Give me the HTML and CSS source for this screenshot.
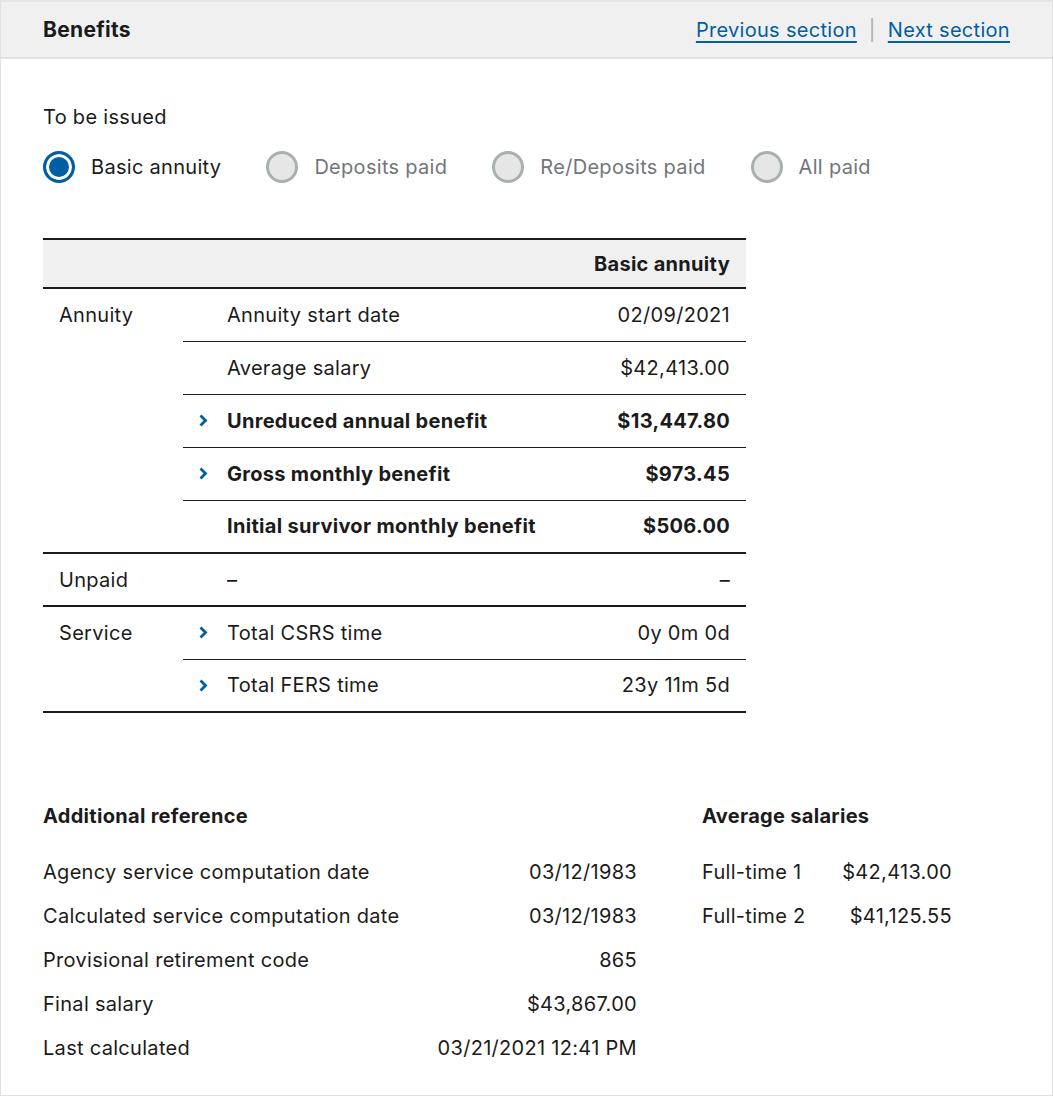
FILE: index.html
```html
<!DOCTYPE html>
<html lang="en">
<head>
<meta charset="utf-8">
<title>Benefits</title>
<link rel="stylesheet" href="styles.css">
</head>
<body>
<div class="page">
  <header class="bar">
    <h1 class="bar-title">Benefits</h1>
    <nav class="bar-nav">
      <a href="#" class="link">Previous section</a>
      <span class="sep">|</span>
      <a href="#" class="link">Next section</a>
    </nav>
  </header>
  <main class="content">
    <div class="issued-label">To be issued</div>
    <div class="radios">
      <label class="radio checked"><span class="dot"></span><span class="radio-text">Basic annuity</span></label>
      <label class="radio"><span class="dot"></span><span class="radio-text">Deposits paid</span></label>
      <label class="radio"><span class="dot"></span><span class="radio-text">Re/Deposits paid</span></label>
      <label class="radio"><span class="dot"></span><span class="radio-text">All paid</span></label>
    </div>

    <table class="bt">
      <colgroup>
        <col class="c1"><col class="c2"><col class="c3"><col class="c4">
      </colgroup>
      <thead>
        <tr class="head"><th></th><th></th><th></th><th class="num">Basic annuity</th></tr>
      </thead>
      <tbody class="grp">
        <tr><td class="cat" rowspan="5">Annuity</td><td class="chev"></td><td>Annuity start date</td><td class="num">02/09/2021</td></tr>
        <tr><td class="chev"></td><td>Average salary</td><td class="num">$42,413.00</td></tr>
        <tr class="b"><td class="chev"><svg width="9" height="13" viewBox="0 0 9 13"><path d="M1.5 1.5 L6.5 6.5 L1.5 11.5" fill="none" stroke="#005ea2" stroke-width="2.8"/></svg></td><td>Unreduced annual benefit</td><td class="num">$13,447.80</td></tr>
        <tr class="b"><td class="chev"><svg width="9" height="13" viewBox="0 0 9 13"><path d="M1.5 1.5 L6.5 6.5 L1.5 11.5" fill="none" stroke="#005ea2" stroke-width="2.8"/></svg></td><td>Gross monthly benefit</td><td class="num">$973.45</td></tr>
        <tr class="b last"><td class="chev"></td><td>Initial survivor monthly benefit</td><td class="num">$506.00</td></tr>
      </tbody>
      <tbody class="grp">
        <tr class="last"><td class="cat">Unpaid</td><td class="chev"></td><td>–</td><td class="num">–</td></tr>
      </tbody>
      <tbody class="grp">
        <tr><td class="cat" rowspan="2">Service</td><td class="chev"><svg width="9" height="13" viewBox="0 0 9 13"><path d="M1.5 1.5 L6.5 6.5 L1.5 11.5" fill="none" stroke="#005ea2" stroke-width="2.8"/></svg></td><td>Total CSRS time</td><td class="num">0y 0m 0d</td></tr>
        <tr class="last"><td class="chev"><svg width="9" height="13" viewBox="0 0 9 13"><path d="M1.5 1.5 L6.5 6.5 L1.5 11.5" fill="none" stroke="#005ea2" stroke-width="2.8"/></svg></td><td>Total FERS time</td><td class="num">23y 11m 5d</td></tr>
      </tbody>
    </table>

    <section class="extra">
      <div class="ref">
        <h2 class="sub">Additional reference</h2>
        <dl class="ref-list">
          <div class="ref-row"><dt>Agency service computation date</dt><dd>03/12/1983</dd></div>
          <div class="ref-row"><dt>Calculated service computation date</dt><dd>03/12/1983</dd></div>
          <div class="ref-row"><dt>Provisional retirement code</dt><dd>865</dd></div>
          <div class="ref-row"><dt>Final salary</dt><dd>$43,867.00</dd></div>
          <div class="ref-row"><dt>Last calculated</dt><dd>03/21/2021 12:41 PM</dd></div>
        </dl>
      </div>
      <div class="avg">
        <h2 class="sub">Average salaries</h2>
        <dl class="avg-list">
          <dt>Full-time 1</dt><dd>$42,413.00</dd>
          <dt>Full-time 2</dt><dd>$41,125.55</dd>
        </dl>
      </div>
    </section>
  </main>
</div>
</body>
</html>
```

FILE: styles.css
```css
* { box-sizing: border-box; }
html, body { margin: 0; padding: 0; background: #fff; }
body {
  font-family: Inter, "Liberation Sans", sans-serif;
  font-size: 20px;
  letter-spacing: 0.3px;
  color: #1b1b1b;
}
.page {
  width: 1053px;
  height: 1096px;
  border: 1px solid #dfe1e2;
  border-top: 2px solid #e4e4e4;
}
.bar {
  height: 57px;
  background: #f0f0f0;
  border-bottom: 2px solid #dfe1e2;
  display: flex;
  align-items: center;
  justify-content: space-between;
  padding: 0 42px 0 42px;
}
.bar-title { margin: 0; font-size: 21px; font-weight: 700; }
.bar-nav { display: flex; align-items: center; gap: 12px; }
.link { color: #005ea2; text-decoration: underline; text-underline-offset: 4px; }
.sep { color: #a9aeb1; }
.content { padding: 44px 42px 0 42px; }
.issued-label { line-height: 28px; }
.radios { display: flex; gap: 45px; margin-top: 13px; height: 46px; align-items: center; }
.radio { display: flex; align-items: center; gap: 16px; color: #71767a; }
.radio.checked { color: #1b1b1b; }
.dot {
  width: 32px; height: 32px; border-radius: 50%;
  border: 3px solid #a9aeb1; background: #e6e6e6;
}
.radio.checked .dot {
  border-color: #005ea2; background: #005ea2;
  box-shadow: inset 0 0 0 3px #fff;
}
.bt {
  margin-top: 48px;
  width: 703px;
  border-collapse: collapse;
  border-top: 2px solid #1b1b1b;
}
.c1 { width: 140px; } .c2 { width: 44px; } .c3 { width: 310px; } .c4 { width: 209px; }
.bt th, .bt td { padding: 0; height: 53px; text-align: left; font-weight: 400; vertical-align: middle; }
.bt thead th { height: 49px; background: #f0f0f0; border-bottom: 2px solid #1b1b1b; font-weight: 700; }
.bt td { border-bottom: 1px solid #1b1b1b; }
.bt .num { text-align: right; padding-right: 16px; }
.bt .cat { vertical-align: top; padding: 14px 16px 0 16px; }
.bt tr.last td, .bt td.cat { border-bottom: 2px solid #1b1b1b; }
.bt .chev { padding-left: 16px; }
.bt .chev svg { display: block; }
.bt tr.b td { font-weight: 700; }
.extra { display: flex; gap: 65px; margin-top: 89px; }
.ref { width: 594px; }
.sub { margin: 0; font-size: 20px; font-weight: 700; line-height: 28px; }
.ref-list { margin: 28px 0 0 0; }
.ref-row { display: flex; justify-content: space-between; line-height: 28px; margin-bottom: 16px; }
.ref-row dt, .ref-row dd { margin: 0; }
.avg-list { margin: 28px 0 0 0; display: grid; grid-template-columns: 130px 120px; row-gap: 16px; line-height: 28px; }
.avg-list dt, .avg-list dd { margin: 0; }
.avg-list dd { text-align: right; }
```
